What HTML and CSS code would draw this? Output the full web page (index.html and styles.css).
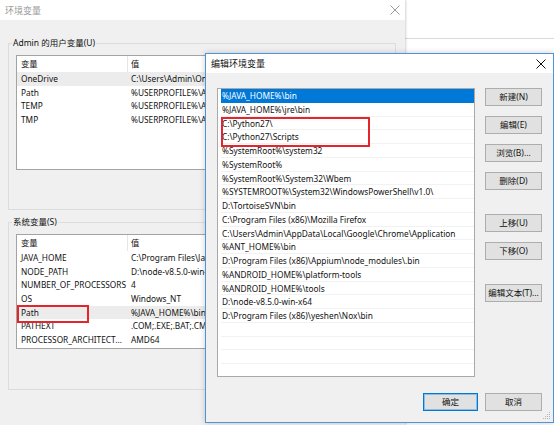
FILE: index.html
```html
<!DOCTYPE html>
<html lang="zh-CN">
<head>
<meta charset="utf-8">
<title>编辑环境变量</title>
<link rel="stylesheet" href="styles.css">
</head>
<body>
<div class="desk">
  <div class="bgwin"></div>

  <div class="win envwin">
    <div class="titlebar">
      <span class="title">环境变量</span>
      <svg class="close" width="10" height="10" viewBox="0 0 10 10"><path d="M0.5 0.5L9.5 9.5M9.5 0.5L0.5 9.5" stroke="#9a9a9a" stroke-width="1" fill="none"/></svg>
    </div>
    <div class="winbody">
      <fieldset class="group user">
        <legend>Admin 的用户变量(U)</legend>
        <div class="lv">
          <div class="lvhead"><span class="c1">变量</span><span class="c2">值</span></div>
          <div class="lvrow sel"><span class="c1">OneDrive</span><span class="c2">C:\Users\Admin\OneDrive</span></div>
          <div class="lvrow"><span class="c1">Path</span><span class="c2">%USERPROFILE%\AppData\Local\Microsoft\WindowsApps</span></div>
          <div class="lvrow"><span class="c1">TEMP</span><span class="c2">%USERPROFILE%\AppData\Local\Temp</span></div>
          <div class="lvrow"><span class="c1">TMP</span><span class="c2">%USERPROFILE%\AppData\Local\Temp</span></div>
        </div>
      </fieldset>
      <fieldset class="group sys">
        <legend>系统变量(S)</legend>
        <div class="lv">
          <div class="lvhead"><span class="c1">变量</span><span class="c2">值</span></div>
          <div class="lvrow"><span class="c1">JAVA_HOME</span><span class="c2">C:\Program Files\Java\jdk1.8.0_144</span></div>
          <div class="lvrow"><span class="c1">NODE_PATH</span><span class="c2">D:\node-v8.5.0-win-x64\node_global\node_modules</span></div>
          <div class="lvrow"><span class="c1">NUMBER_OF_PROCESSORS</span><span class="c2">4</span></div>
          <div class="lvrow"><span class="c1">OS</span><span class="c2">Windows_NT</span></div>
          <div class="lvrow sel"><span class="c1">Path</span><span class="c2">%JAVA_HOME%\bin;%JAVA_HOME%\jre\bin;C:\Python27\</span></div>
          <div class="lvrow"><span class="c1">PATHEXT</span><span class="c2">.COM;.EXE;.BAT;.CMD;.VBS;.VBE;.JS;.JSE</span></div>
          <div class="lvrow"><span class="c1">PROCESSOR_ARCHITECT...</span><span class="c2">AMD64</span></div>
          <div class="mark mark-path"></div>
        </div>
      </fieldset>
    </div>
  </div>

  <div class="win dialog">
    <div class="titlebar">
      <span class="title">编辑环境变量</span>
      <svg class="close" width="10" height="10" viewBox="0 0 10 10"><path d="M0.5 0.5L9.5 9.5M9.5 0.5L0.5 9.5" stroke="#111" stroke-width="1" fill="none"/></svg>
    </div>
    <div class="dlgbody">
      <div class="dlgtop">
        <div class="plist">
          <div class="prow sel">%JAVA_HOME%\bin</div>
          <div class="prow">%JAVA_HOME%\jre\bin</div>
          <div class="prow">C:\Python27\</div>
          <div class="prow">C:\Python27\Scripts</div>
          <div class="prow">%SystemRoot%\system32</div>
          <div class="prow">%SystemRoot%</div>
          <div class="prow">%SystemRoot%\System32\Wbem</div>
          <div class="prow">%SYSTEMROOT%\System32\WindowsPowerShell\v1.0\</div>
          <div class="prow">D:\TortoiseSVN\bin</div>
          <div class="prow">C:\Program Files (x86)\Mozilla Firefox</div>
          <div class="prow">C:\Users\Admin\AppData\Local\Google\Chrome\Application</div>
          <div class="prow">%ANT_HOME%\bin</div>
          <div class="prow">D:\Program Files (x86)\Appium\node_modules\.bin</div>
          <div class="prow">%ANDROID_HOME%\platform-tools</div>
          <div class="prow">%ANDROID_HOME%\tools</div>
          <div class="prow">D:\node-v8.5.0-win-x64</div>
          <div class="prow">D:\Program Files (x86)\yeshen\Nox\bin</div>
          <div class="prow"></div>
          <div class="prow"></div>
          <div class="prow"></div>
          <div class="prow"></div>
          <div class="mark mark-py"></div>
        </div>
        <div class="btncol">
          <button class="btn">新建(N)</button>
          <button class="btn gap">编辑(E)</button>
          <button class="btn gap">浏览(B)...</button>
          <button class="btn gap">删除(D)</button>
          <button class="btn biggap">上移(U)</button>
          <button class="btn gap">下移(O)</button>
          <button class="btn biggap">编辑文本(T)...</button>
        </div>
      </div>
      <div class="dlgfoot">
        <button class="btn def">确定</button>
        <button class="btn">取消</button>
      </div>
    </div>
    <svg class="grip" width="8" height="8" viewBox="0 0 8 8"><g fill="#b5b5b5"><rect x="6" y="0" width="1" height="1"/><rect x="4" y="2" width="1" height="1"/><rect x="6" y="2" width="1" height="1"/><rect x="2" y="4" width="1" height="1"/><rect x="4" y="4" width="1" height="1"/><rect x="6" y="4" width="1" height="1"/><rect x="0" y="6" width="1" height="1"/><rect x="2" y="6" width="1" height="1"/><rect x="4" y="6" width="1" height="1"/><rect x="6" y="6" width="1" height="1"/></g></svg>
  </div>
</div>
</body>
</html>
```
FILE: styles.css
```css
* { box-sizing: border-box; }
html, body { margin: 0; padding: 0; }
body {
  width: 554px;
  height: 425px;
  overflow: hidden;
  background: #ffffff;
  font-family: "Noto Sans", "Noto Sans CJK SC", sans-serif;
  font-size: 8.3px;
  color: #111111;
}
.desk { position: relative; width: 554px; height: 425px; overflow: hidden; }

.bgwin {
  position: absolute;
  left: 400px;
  top: 0;
  width: 154px;
  height: 425px;
  background: #ffffff;
}
.bgwin::after {
  content: "";
  display: block;
  margin-top: 38px;
  height: 1px;
  background: #dadada;
}

.win { position: absolute; }

.envwin {
  left: 0;
  top: 0;
  width: 405px;
  height: 425px;
  background: #f0f0f0;
  box-shadow: 1px 0 2px rgba(0,0,0,0.18);
}
.titlebar {
  height: 20px;
  background: #ffffff;
  display: flex;
  align-items: center;
  justify-content: space-between;
  padding: 0 5px 0 5px;
  font-size: 9px;
}
.envwin .title { color: #9a9a9a; }
.close { display: block; }

.winbody { padding-top: 16px; }

.group {
  margin: 0 0 0 8px;
  width: 388px;
  border: 1px solid #dcdcdc;
  padding: 5px 7px 39px 7px;
  min-width: 0;
}
.group legend {
  margin-left: -4px;
  padding: 0 1px;
  line-height: 14px;
  height: 14px;
  font-size: 8.5px;
}
.group.sys { margin-top: 5px; padding-bottom: 40px; }

.lv {
  position: relative;
  background: #ffffff;
  border: 1px solid #a3a3a3;
  height: 115px;
  overflow: hidden;
}
.lvhead, .lvrow {
  display: flex;
  white-space: nowrap;
}
.lvhead { height: 16px; line-height: 16px; }
.lvrow { height: 13.7px; line-height: 13.7px; }
.lvrow.sel { background: #ececec; }
.c1 {
  width: 111px;
  flex: none;
  padding-left: 4px;
  overflow: hidden;
}
.lvhead .c1 { border-right: 1px solid #e6e6e6; }
.c2 { padding-left: 3px; }

.mark {
  position: absolute;
  border: 2px solid #e4262c;
}
.mark-path { left: 0; top: 70px; width: 72px; height: 18px; }

.dialog {
  left: 205px;
  top: 53px;
  width: 349px;
  height: 370px;
  border: 1px solid #4f94d8;
  background: #f0f0f0;
  box-shadow: 0 0 6px rgba(0,0,0,0.2);
}
.dialog .titlebar { height: 19px; padding: 0 7px 0 5px; }
.dialog .title { color: #111; }

.dlgbody { padding: 15px 11px 0 11px; }
.dlgtop { display: flex; gap: 10px; }

.plist {
  position: relative;
  width: 258px;
  height: 289px;
  background: #ffffff;
  border: 1px solid #a9a9a9;
  padding: 0 0 0 3px;
  overflow: hidden;
}
.prow {
  height: 13.75px;
  line-height: 13px;
  padding-left: 1px;
  border-bottom: 1px solid #f2f2f2;
  white-space: nowrap;
}
.prow.sel { background: #0078d7; color: #ffffff; border-bottom-color: #0078d7; }
.mark-py { left: 3px; top: 28px; width: 149px; height: 30px; }

.btncol { display: flex; flex-direction: column; width: 57px; }
.btn {
  width: 57px;
  height: 18px;
  padding: 0;
  margin: 0;
  background: #e1e1e1;
  border: 1px solid #adadad;
  font-family: inherit;
  font-size: 8.5px;
  color: #111111;
  line-height: 16px;
  white-space: nowrap;
}
.btn.gap { margin-top: 10px; }
.btn.biggap { margin-top: 24px; }

.dlgfoot {
  display: flex;
  justify-content: flex-end;
  gap: 7px;
  margin-top: 16px;
}
.dlgfoot .btn.def { width: 55px; border-color: #0078d7; box-shadow: inset 0 0 0 1px rgba(0,120,215,0.35); }

.grip { position: absolute; right: 2px; bottom: 2px; }
```
